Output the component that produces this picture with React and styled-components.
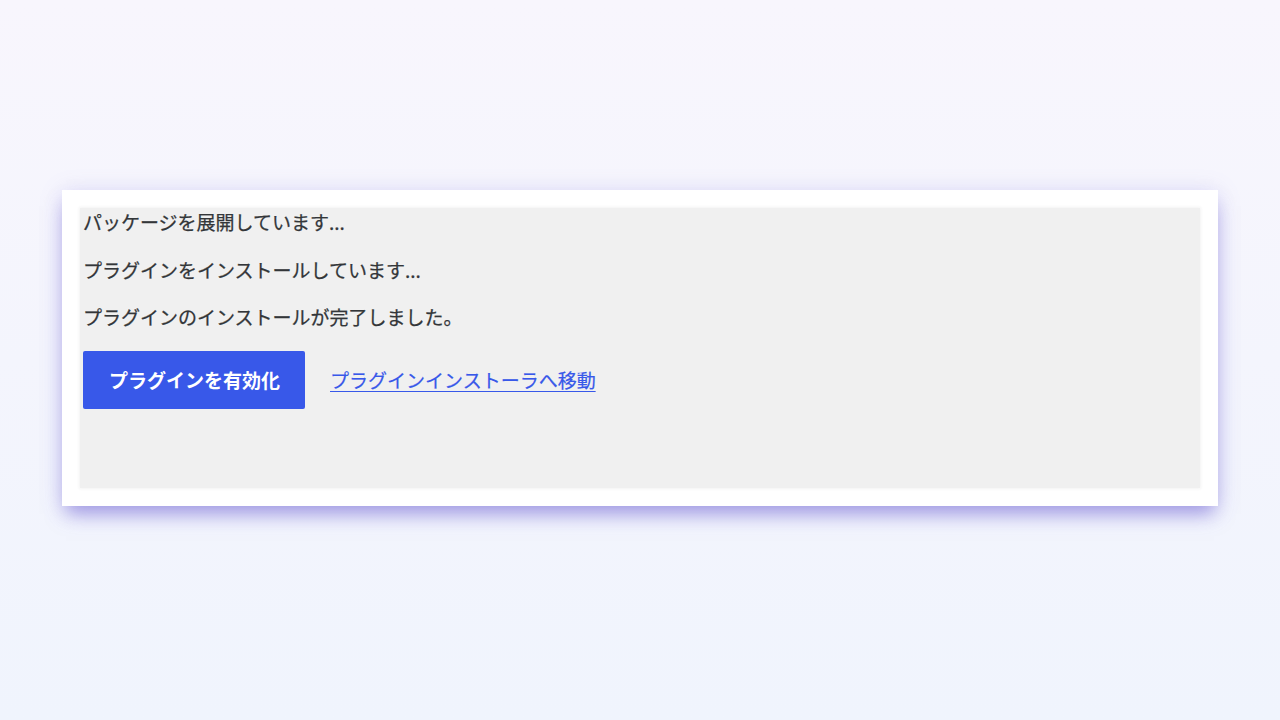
import React from "react"
import styled, { createGlobalStyle } from "styled-components"

const GlobalStyle = createGlobalStyle`
  html, body {
    margin: 0;
    padding: 0;
  }
  body {
    font-family: "Noto Sans CJK JP", "Noto Sans", sans-serif;
  }
`

const Page = styled.div`
  box-sizing: border-box;
  width: 100%;
  height: 720px;
  padding-top: 190px;
  display: flex;
  justify-content: center;
  align-items: flex-start;
  background: linear-gradient(180deg, #f8f6fd 0%, #f0f4fd 100%);
`

const Card = styled.div`
  box-sizing: border-box;
  width: 1156px;
  padding: 18px;
  background: #ffffff;
  box-shadow:
    0 12px 18px -4px rgba(108, 94, 210, 0.55),
    0 2px 22px rgba(120, 108, 220, 0.2);
`

const Panel = styled.div`
  box-sizing: border-box;
  height: 280px;
  padding: 0 3px;
  background: #f0f0f0;
  box-shadow: 0 0 3px 1px #f3f3f3;
`

const Line = styled.p`
  margin: 0 0 19px;
  font-size: 19px;
  line-height: 28.5px;
  color: #333639;
  -webkit-text-stroke: 0.25px #333639;
`

const Actions = styled.div`
  display: flex;
  align-items: center;
  gap: 25px;
`

const Button = styled.button`
  height: 58px;
  padding: 0 25px 0 26px;
  border: none;
  border-radius: 2px;
  background: #3858e9;
  color: #ffffff;
  font-family: inherit;
  font-size: 19px;
  font-weight: 700;
  cursor: pointer;
`

const TextLink = styled.a`
  font-size: 19px;
  color: #3858e9;
  -webkit-text-stroke: 0.2px #3858e9;
  text-decoration: underline;
  text-underline-offset: 3px;
`

const App = () => {
  return (
    <Page>
      <GlobalStyle />
      <Card>
        <Panel>
          <Line>パッケージを展開しています...</Line>
          <Line>プラグインをインストールしています...</Line>
          <Line>プラグインのインストールが完了しました。</Line>
          <Actions>
            <Button>プラグインを有効化</Button>
            <TextLink href="#">プラグインインストーラへ移動</TextLink>
          </Actions>
        </Panel>
      </Card>
    </Page>
  )
}

export default App
